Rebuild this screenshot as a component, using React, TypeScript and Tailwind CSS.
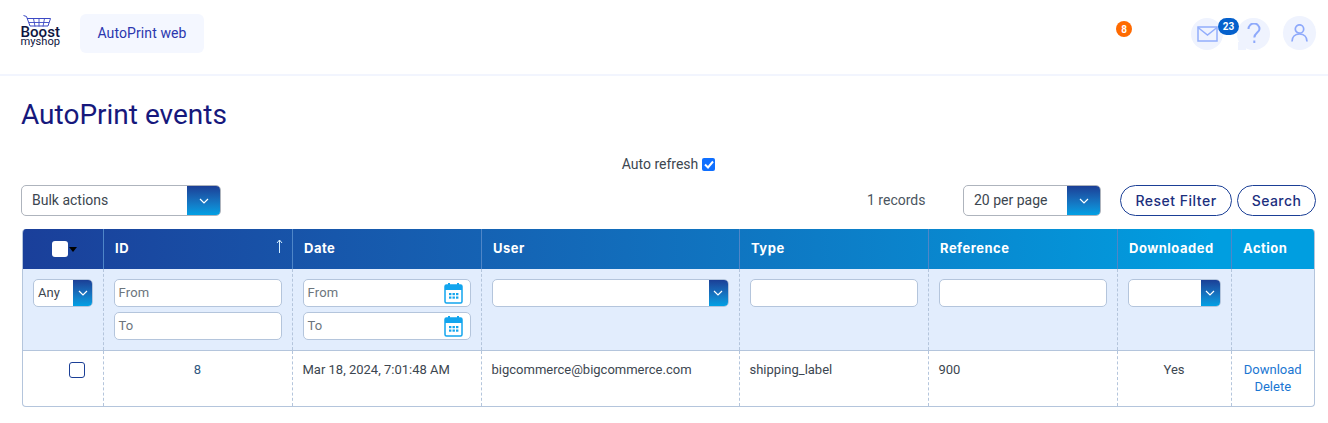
import React from "react";

function Chevron() {
  return (
    <svg width="10" height="6" viewBox="0 0 10 6" fill="none" stroke="#ffffff" strokeWidth="1.2">
      <path d="M1 1l4 4 4-4" />
    </svg>
  );
}

function Select({ label, cls, arrowCls }: { label?: string; cls: string; arrowCls: string }) {
  return (
    <div className={`flex shrink-0 items-stretch bg-white border border-[#aeb4bd] rounded-[5px] overflow-hidden ${cls}`}>
      <span className="flex-1 flex items-center pl-[10px] text-[14px] text-[#3c4650]">{label}</span>
      <span className={`flex items-center justify-center bg-gradient-to-b from-[#1b3f96] to-[#00a0e4] ${arrowCls}`}>
        <Chevron />
      </span>
    </div>
  );
}

function Calendar() {
  return (
    <svg width="19" height="22" viewBox="0 0 19 22" className="shrink-0">
      <rect x="1" y="3" width="17" height="18" rx="1.5" fill="#ffffff" stroke="#12a5ee" strokeWidth="1.5" />
      <rect x="1" y="3" width="17" height="5" fill="#12a5ee" />
      <rect x="4" y="1" width="2" height="4" fill="#12a5ee" />
      <rect x="13" y="1" width="2" height="4" fill="#12a5ee" />
      {[5, 8.5, 12].map((x) =>
        [11, 14.5].map((y) => <rect key={`${x}-${y}`} x={x} y={y} width="2.4" height="2.2" fill="#12a5ee" />)
      )}
    </svg>
  );
}

function Field({ placeholder, icon }: { placeholder?: string; icon?: boolean }) {
  return (
    <div className="flex items-center justify-between h-[28px] bg-white border border-[#b4c5dc] rounded-[5px] pl-[4px] pr-[7px] text-[13px] tracking-[0.2px] text-[#6c757d]">
      <span>{placeholder}</span>
      {icon && <Calendar />}
    </div>
  );
}

const headers = ["ID", "Date", "User", "Type", "Reference", "Downloaded", "Action"];
const cellBorder = "border-l border-dashed border-[#b4c5dc] align-top";

export default function App() {
  return (
    <div className="w-[1328px] h-[423px] overflow-hidden bg-white text-[#3c4650] font-['Roboto',sans-serif] text-[13px]">
      <header className="h-[76px] border-b-2 border-[#f2f5fe] flex items-start justify-between pl-[20px] pr-[12px]">
        <div className="flex items-start">
          <svg width="41" height="34" viewBox="0 0 41 34" className="mt-[15px]" fill="none">
            <path d="M3.5 0.5l3 1 3.5 9.5h18l2.5-7.5H7" stroke="#3b48c4" strokeWidth="1" />
            <path d="M9 7.5h20M13.5 3.5l1.5 8M19 3.5v8M24.5 3.5l-1.5 8" stroke="#3b48c4" strokeWidth="0.9" />
            <text x="0.5" y="21.5" fontFamily="Roboto, sans-serif" fontSize="15" fontWeight="500" fill="#0e1440" textLength="39.5" lengthAdjust="spacingAndGlyphs">
              Boost
            </text>
            <text x="0.5" y="30" fontFamily="Roboto, sans-serif" fontSize="10" fill="#0e1440" textLength="39.5" lengthAdjust="spacingAndGlyphs">
              myshop
            </text>
          </svg>
          <div className="ml-[19px] mt-[14px] w-[124px] h-[39px] rounded-[6px] bg-[#f4f7ff] flex items-center justify-center text-[14px] font-normal tracking-[0.1px] text-[#2b36ae]">
            AutoPrint web
          </div>
        </div>
        <div className="flex items-start">
          <span className="mt-[21px] w-[16px] h-[16px] rounded-full bg-[#ff6a00] text-white text-[10px] font-bold flex items-center justify-center">
            8
          </span>
          <div className="relative ml-[59px] mt-[18px] w-[32px] h-[32px] rounded-full bg-[#eff3fe] flex items-center justify-center">
            <svg width="21" height="16" viewBox="0 0 21 16" fill="none" stroke="#93aefc" strokeWidth="1.5">
              <rect x="1" y="1" width="19" height="14" />
              <path d="M1 1.5l9.5 7.5 9.5-7.5" />
            </svg>
            <span className="absolute left-[27px] top-0 w-[21px] h-[17px] rounded-full bg-[#0560cc] text-white text-[10px] font-bold flex items-center justify-center z-10">
              23
            </span>
          </div>
          <div className="relative ml-[14px] mt-[18px] w-[33px] h-[32px] rounded-full bg-[#eff3fe] flex items-center justify-center">
            <span className="absolute left-[1px] bottom-0 w-[8px] h-[8px] bg-[#eff3fe]" />
            <svg width="14" height="22" viewBox="0 0 14 22" fill="none" stroke="#8ea9fb" strokeWidth="2" className="relative">
              <path d="M1.5 6a5.5 5.5 0 0 1 11 0c0 3.2-5.2 4-5.2 8.5" />
              <path d="M7.3 17.5v2.5" />
            </svg>
          </div>
          <div className="ml-[13px] mt-[16px] w-[33px] h-[34px] rounded-full bg-[#eff3fe] flex items-center justify-center">
            <svg width="17" height="18" viewBox="0 0 17 18" fill="none" stroke="#8ea9fb" strokeWidth="1.7">
              <circle cx="8.5" cy="5" r="4.2" />
              <path d="M1 17.5c0-4.5 3-7.5 7.5-7.5s7.5 3 7.5 7.5" />
            </svg>
          </div>
        </div>
      </header>

      <main className="pl-[21px] pr-[12px]">
        <h1 className="mt-[22px] text-[28px] leading-[34px] text-[#16187c]">AutoPrint events</h1>

        <div className="mt-[22px] flex items-center justify-center gap-[4px] h-[20px] text-[14px]">
          <span>Auto refresh</span>
          <span className="w-[13px] h-[13px] rounded-[2px] bg-[#0f6fff] flex items-center justify-center">
            <svg width="10" height="9" viewBox="0 0 10 9" fill="none" stroke="#fff" strokeWidth="2">
              <path d="M1 4.5l3 3 5-6" />
            </svg>
          </span>
        </div>

        <div className="mt-[11px] flex items-center h-[31px]">
          <Select label="Bulk actions" cls="w-[200px] h-[31px]" arrowCls="w-[33px]" />
          <span className="ml-[646px] w-[96px] shrink-0 text-[14px] text-[#4b5560]">1 records</span>
          <Select label="20 per page" cls="w-[138px] h-[31px]" arrowCls="w-[33px]" />
          <button className="ml-[19px] w-[112px] h-[31px] shrink-0 rounded-full border border-[#1b3f96] text-[14px] font-['Inter',sans-serif] font-medium text-[#1c2f7e] tracking-[0.5px]">
            Reset Filter
          </button>
          <button className="ml-[5px] w-[79px] h-[31px] shrink-0 rounded-full border border-[#1b3f96] text-[14px] font-['Inter',sans-serif] font-medium text-[#1c2f7e] tracking-[0.4px]">
            Search
          </button>
        </div>

        <div className="mt-[13px] ml-[1px] w-[1293px] rounded-[4px] overflow-hidden border-x border-b border-[#b4c5dc]">
          <table className="w-full table-fixed border-collapse">
            <colgroup>
              <col className="w-[80px]" />
              <col className="w-[189px]" />
              <col className="w-[189px]" />
              <col className="w-[258px]" />
              <col className="w-[189px]" />
              <col className="w-[189px]" />
              <col className="w-[114px]" />
              <col />
            </colgroup>
            <thead>
              <tr className="h-[40px] bg-gradient-to-r from-[#1a3f9a] via-[#0e78c3] via-[58%] to-[#009ee0] to-[92%] text-white text-left text-[13px] font-['Inter',sans-serif] font-bold tracking-[0.5px]">
                <th className="p-0">
                  <div className="flex items-center justify-center pl-[3px]">
                    <span className="w-[16px] h-[16px] rounded-[3px] bg-white" />
                    <span className="ml-[1px] w-0 h-0 border-x-[4px] border-x-transparent border-t-[5px] border-t-black" />
                  </div>
                </th>
                {headers.map((h) => (
                  <th key={h} className="relative pl-[11.5px] pr-0 font-bold border-l border-[#4f86c8]">
                    {h}
                    {h === "ID" && (
                      <svg width="7" height="14" viewBox="0 0 7 14" fill="none" stroke="#d6f0ff" strokeWidth="1" className="absolute right-[9px] top-[10px]">
                        <path d="M3.5 14V1M1 4l2.5-3L6 4" />
                      </svg>
                    )}
                  </th>
                ))}
              </tr>
            </thead>
            <tbody>
              <tr className="h-[81px] bg-[#e2edfd] border-b border-[#b4c5dc]">
                <td className="align-top pt-[10px] pl-[10px]">
                  <div className="flex items-stretch w-[60px] h-[28px] bg-white border border-[#b4c5dc] rounded-[5px] overflow-hidden">
                    <span className="flex-1 flex items-center pl-[4px] text-[13px] text-[#3c4650]">Any</span>
                    <span className="w-[19px] flex items-center justify-center bg-gradient-to-b from-[#1b3f96] to-[#00a0e4]">
                      <Chevron />
                    </span>
                  </div>
                </td>
                <td className={`${cellBorder} pt-[10px] px-[10px]`}>
                  <div className="flex flex-col gap-[5px]">
                    <Field placeholder="From" />
                    <Field placeholder="To" />
                  </div>
                </td>
                <td className={`${cellBorder} pt-[10px] px-[10px]`}>
                  <div className="flex flex-col gap-[5px]">
                    <Field placeholder="From" icon />
                    <Field placeholder="To" icon />
                  </div>
                </td>
                <td className={`${cellBorder} pt-[10px] px-[10px]`}>
                  <Select cls="h-[28px] border-[#b4c5dc]" arrowCls="w-[19px]" />
                </td>
                <td className={`${cellBorder} pt-[10px] px-[10px]`}>
                  <Field />
                </td>
                <td className={`${cellBorder} pt-[10px] px-[10px]`}>
                  <Field />
                </td>
                <td className={`${cellBorder} pt-[10px] px-[10px]`}>
                  <Select cls="h-[28px] border-[#b4c5dc]" arrowCls="w-[19px]" />
                </td>
                <td className={cellBorder} />
              </tr>
              <tr className="h-[56px]">
                <td className="align-top pt-[11px] pl-[46px]">
                  <span className="block w-[16px] h-[16px] rounded-[3px] border border-[#1b3f96]" />
                </td>
                <td className={`${cellBorder} pt-[9px] text-center text-[#31587f]`}>8</td>
                <td className={`${cellBorder} pt-[9px] px-[10px]`}>Mar 18, 2024, 7:01:48 AM</td>
                <td className={`${cellBorder} pt-[9px] pl-[10px]`}>bigcommerce@bigcommerce.com</td>
                <td className={`${cellBorder} pt-[9px] px-[10px]`}>shipping_label</td>
                <td className={`${cellBorder} pt-[9px] px-[10px]`}>900</td>
                <td className={`${cellBorder} pt-[9px] text-center`}>Yes</td>
                <td className={`${cellBorder} pt-[10px] text-center text-[#1a76d2] leading-[17px]`}>
                  <div>Download</div>
                  <div>Delete</div>
                </td>
              </tr>
            </tbody>
          </table>
        </div>
      </main>
    </div>
  );
}
